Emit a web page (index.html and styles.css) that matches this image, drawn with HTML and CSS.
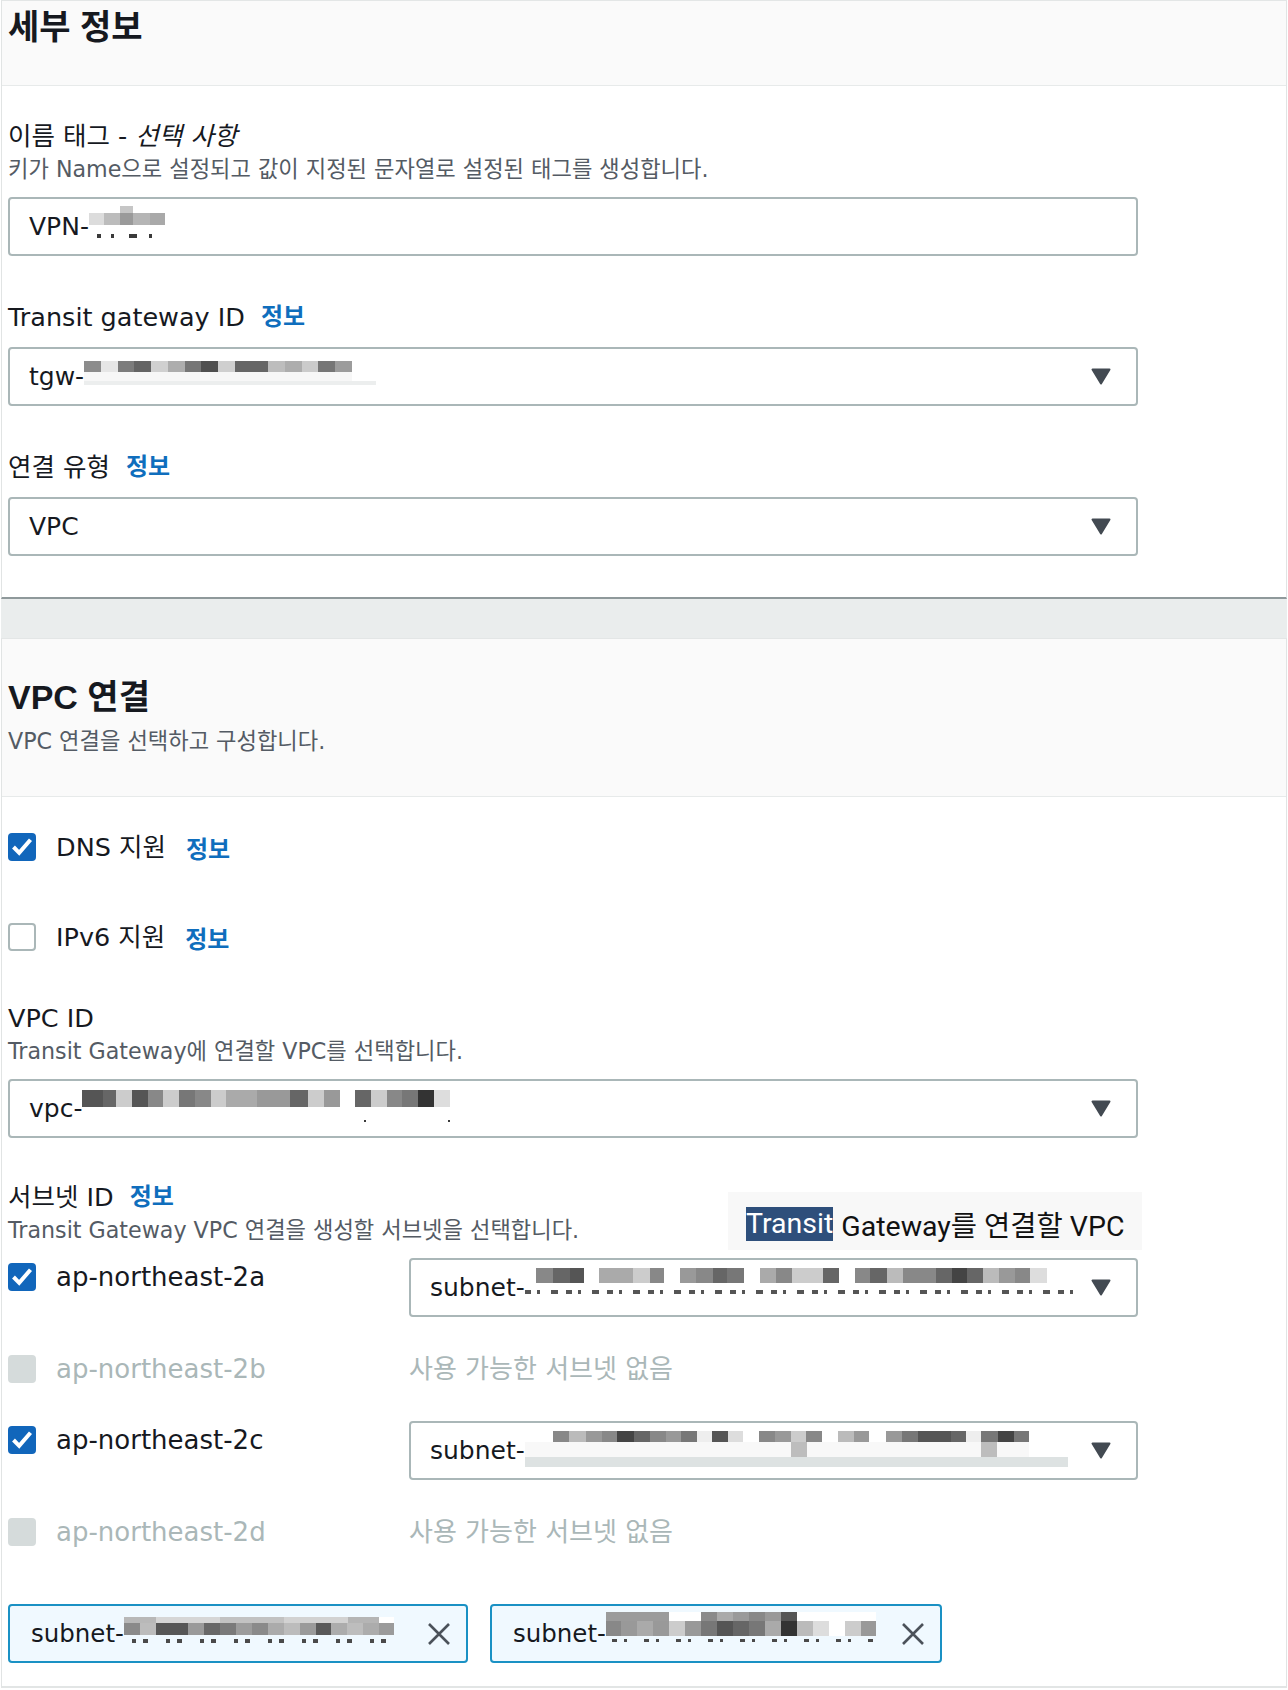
FILE: index.html
```html
<!DOCTYPE html>
<html lang="ko">
<head>
<meta charset="utf-8">
<title>VPC 연결</title>
<link rel="stylesheet" href="styles.css">
</head>
<body>
<div class="page">
  <section class="panel panel-top">
    <header class="panel-header header-details">
      <h2 class="panel-title">세부 정보</h2>
    </header>
    <div class="panel-body body-details">
      <div class="field">
        <div class="label"><span>이름 태그 - <em>선택 사항</em></span></div>
        <div class="desc">키가 Name으로 설정되고 값이 지정된 문자열로 설정된 태그를 생성합니다.</div>
        <div class="control input"><span class="value">VPN-</span><span class="mosaic mz-vpn"></span></div>
      </div>
      <div class="field">
        <div class="label"><span>Transit gateway ID</span><a class="info">정보</a></div>
        <div class="control select"><span class="value">tgw-</span><span class="mosaic mz-tgw"></span>
          <svg class="caret" viewBox="0 0 20 17" width="20" height="17"><path d="M1.5 1.5 H18.5 L10 15.5 Z"/></svg>
        </div>
      </div>
      <div class="field">
        <div class="label"><span>연결 유형</span><a class="info">정보</a></div>
        <div class="control select"><span class="value">VPC</span>
          <svg class="caret" viewBox="0 0 20 17" width="20" height="17"><path d="M1.5 1.5 H18.5 L10 15.5 Z"/></svg>
        </div>
      </div>
    </div>
  </section>

  <div class="band"></div>

  <section class="panel panel-bottom">
    <header class="panel-header header-vpc">
      <h2 class="panel-title">VPC 연결</h2>
      <p class="header-desc">VPC 연결을 선택하고 구성합니다.</p>
    </header>
    <div class="panel-body body-vpc">
      <div class="check-row">
        <span class="cb cb-on"><svg viewBox="0 0 28 28" width="28" height="28"><path d="M5.5 14 L11.2 19.8 L22.5 6.8"/></svg></span>
        <span class="cb-text">DNS 지원</span><a class="info">정보</a>
      </div>
      <div class="check-row row-ipv6">
        <span class="cb cb-off"></span>
        <span class="cb-text">IPv6 지원</span><a class="info">정보</a>
      </div>

      <div class="field field-vpc">
        <div class="label"><span>VPC ID</span></div>
        <div class="desc">Transit Gateway에 연결할 VPC를 선택합니다.</div>
        <div class="control select"><span class="value">vpc-</span><span class="mosaic mz-vpc"></span>
          <svg class="caret" viewBox="0 0 20 17" width="20" height="17"><path d="M1.5 1.5 H18.5 L10 15.5 Z"/></svg>
        </div>
      </div>

      <div class="field field-subnet">
        <div class="label"><span>서브넷 ID</span><a class="info">정보</a></div>
        <div class="desc">Transit Gateway VPC 연결을 생성할 서브넷을 선택합니다.</div>
        <div class="tooltip"><mark class="hl">Transit</mark> Gateway를 연결할 VPC</div>
        <div class="az-list">
          <div class="az-row">
            <div class="az-left">
              <span class="cb cb-on"><svg viewBox="0 0 28 28" width="28" height="28"><path d="M5.5 14 L11.2 19.8 L22.5 6.8"/></svg></span>
              <span class="az-name">ap-northeast-2a</span>
            </div>
            <div class="control select select-subnet"><span class="value">subnet-</span><span class="mosaic mz-sub-a"></span>
              <svg class="caret" viewBox="0 0 20 17" width="20" height="17"><path d="M1.5 1.5 H18.5 L10 15.5 Z"/></svg>
            </div>
          </div>
          <div class="az-row">
            <div class="az-left">
              <span class="cb cb-disabled"></span>
              <span class="az-name az-disabled">ap-northeast-2b</span>
            </div>
            <div class="az-empty">사용 가능한 서브넷 없음</div>
          </div>
          <div class="az-row">
            <div class="az-left">
              <span class="cb cb-on"><svg viewBox="0 0 28 28" width="28" height="28"><path d="M5.5 14 L11.2 19.8 L22.5 6.8"/></svg></span>
              <span class="az-name">ap-northeast-2c</span>
            </div>
            <div class="control select select-subnet"><span class="value">subnet-</span><span class="mosaic mz-sub-c"></span>
              <svg class="caret" viewBox="0 0 20 17" width="20" height="17"><path d="M1.5 1.5 H18.5 L10 15.5 Z"/></svg>
            </div>
          </div>
          <div class="az-row">
            <div class="az-left">
              <span class="cb cb-disabled"></span>
              <span class="az-name az-disabled">ap-northeast-2d</span>
            </div>
            <div class="az-empty">사용 가능한 서브넷 없음</div>
          </div>
        </div>
      </div>

      <div class="tokens">
        <div class="token token-1"><span class="value">subnet-</span><span class="mosaic mz-tok1"></span>
          <svg class="dismiss" viewBox="0 0 24 24" width="24" height="24"><path d="M2 2 L22 22 M22 2 L2 22"/></svg>
        </div>
        <div class="token token-2"><span class="value">subnet-</span><span class="mosaic mz-tok2"></span>
          <svg class="dismiss" viewBox="0 0 24 24" width="24" height="24"><path d="M2 2 L22 22 M22 2 L2 22"/></svg>
        </div>
      </div>
    </div>
  </section>
</div>
</body>
</html>
```
FILE: styles.css
```css
* { box-sizing: border-box; }

html, body {
  margin: 0;
  padding: 0;
  background: #ffffff;
}

body {
  font-family: "DejaVu Sans", "Noto Sans CJK KR", sans-serif;
  color: #16191f;
}

.page {
  margin-left: 1px;
  width: 1286px;
  background: #eaeded;
}

.panel {
  background: #ffffff;
  border-top: 1px solid #e3e6e6;
  border-left: 1px solid #e1e4e4;
  border-right: 1px solid #e1e4e4;
}

.panel-top { border-bottom: 2px solid #8f999b; }
.panel-bottom { border-bottom: 2px solid #e2e5e5; }

.band { height: 39px; }

.panel-header {
  background: #fafafa;
  border-bottom: 1px solid #e7eaea;
  padding-left: 6px;
  padding-right: 6px;
}

.header-details { padding-top: 4px; padding-bottom: 36px; }
.header-vpc { padding-top: 36px; padding-bottom: 39px; }

.panel-title {
  margin: 0;
  font-family: "Liberation Sans", "Noto Sans CJK KR", sans-serif;
  font-size: 34px;
  font-weight: 700;
  line-height: 44px;
  color: #16191f;
}

.header-desc {
  margin: 7px 0 0 0;
  font-size: 22.2px;
  line-height: 31px;
  color: #545b64;
}

.panel-body { padding-left: 6px; padding-right: 6px; }
.body-details { padding-top: 32px; padding-bottom: 41px; }
.body-vpc { padding-top: 32px; padding-bottom: 23px; }

.field + .field { margin-top: 43px; }
.field-vpc { margin-top: 45px; }
.field-subnet { margin-top: 41px !important; position: relative; }

.label {
  display: flex;
  align-items: center;
  gap: 16px;
  font-size: 25.5px;
  line-height: 36px;
  color: #16191f;
}

.label em { font-style: italic; }

.desc {
  font-size: 22.2px;
  line-height: 31px;
  color: #545b64;
}

.info {
  font-size: 24px;
  font-weight: 700;
  color: #0f6ebd;
  text-decoration: none;
}

.control {
  margin-top: 12px;
  width: 1130px;
  height: 59px;
  border: 2px solid #aab7b8;
  border-radius: 4px;
  background: #ffffff;
  display: flex;
  align-items: center;
  padding: 0 25px 0 19px;
}

.value {
  font-size: 25px;
  line-height: 36px;
  color: #16191f;
  white-space: nowrap;
}

.caret {
  margin-left: auto;
  flex: none;
  fill: #434a52;
  stroke: #434a52;
  stroke-width: 2;
  stroke-linejoin: round;
}

/* check rows */
.check-row {
  display: flex;
  align-items: center;
  height: 36px;
}
.row-ipv6 { margin-top: 54px; }

.cb {
  flex: none;
  width: 28px;
  height: 28px;
  border-radius: 4px;
  display: inline-flex;
}
.cb svg path {
  fill: none;
  stroke: #ffffff;
  stroke-width: 4;
}
.cb-on { background: #1166bb; }
.cb-off { background: #ffffff; border: 2px solid #aab7b8; }
.cb-disabled { background: #d5dbdb; }

.cb-text {
  margin-left: 20px;
  margin-right: 20px;
  font-size: 25.5px;
  line-height: 36px;
  color: #16191f;
}

/* availability zones */
.az-list {
  margin-top: 12px;
  display: flex;
  flex-direction: column;
  gap: 33px;
}

.az-row {
  display: flex;
  align-items: flex-start;
}

.az-left {
  width: 401px;
  height: 38px;
  flex: none;
  display: flex;
  align-items: center;
}

.az-name {
  margin-left: 20px;
  font-size: 26px;
  line-height: 36px;
  color: #16191f;
}
.az-disabled { color: #aab7b8; }

.az-empty {
  font-size: 26px;
  line-height: 38px;
  color: #aab7b8;
}

.select-subnet {
  margin-top: 0;
  width: 729px;
}

/* tooltip overlay */
.tooltip {
  position: absolute;
  left: 720px;
  top: 13px;
  width: 414px;
  height: 58px;
  background: #f8f8f8;
  display: flex;
  align-items: center;
  padding-left: 18px;
  padding-top: 5px;
  font-family: Roboto, "Noto Sans CJK KR", sans-serif;
  font-size: 28.5px;
  color: #111111;
  white-space: nowrap;
  z-index: 2;
}
.hl {
  background: #2e4f7b;
  color: #ffffff;
  display: inline-block;
  line-height: 34px;
  margin-right: 8px;
}

/* tokens */
.tokens {
  margin-top: 53px;
  display: flex;
  gap: 22px;
}

.token {
  height: 59px;
  border: 2px solid #1a91c4;
  border-radius: 4px;
  background: #f0f9ff;
  display: flex;
  align-items: center;
  padding: 0 15px 0 21px;
}
.token-1 { width: 460px; }
.token-2 { width: 452px; }

.token .value { font-size: 24.5px; }

.dismiss {
  margin-left: auto;
  flex: none;
  fill: none;
  stroke: #4b525a;
  stroke-width: 2.6;
}

/* pixelated (redacted) identifiers */
.mosaic {
  display: block;
  flex: none;
  align-self: flex-start;
  background-repeat: no-repeat;
}

.mz-vpn {
  width: 76px;
  height: 32px;
  margin-top: 7px;
  background-image:
    linear-gradient(#c6c6c6, #c6c6c6),
    linear-gradient(90deg, #dcdcdc 0 15px, #bcbcbc 15px 31px, #9a9a9a 31px 44px, #b5b5b5 44px 61px, #a9a9a9 61px 76px),
    linear-gradient(90deg, transparent 0 8px, #3a3a3a 8px 12px, transparent 12px 22px, #3a3a3a 22px 25px, transparent 25px 40px, #3a3a3a 40px 48px, transparent 48px 60px, #3a3a3a 60px 63px, transparent 63px);
  background-size: 13px 7px, 76px 12px, 76px 4px;
  background-position: 31px 0, 0 7px, 0 28px;
}

.mz-tgw {
  width: 292px;
  height: 24px;
  margin-top: 12px;
  background-image:
    linear-gradient(90deg, #8c8c8c 0 17px, #e6e6e6 17px 34px, #7c7c7c 34px 50px, #646464 50px 67px, #d0d0d0 67px 84px, #adadad 84px 101px, #767676 101px 117px, #4f4f4f 117px 134px, #cfcfcf 134px 151px, #666666 151px 184px, #bdbdbd 184px 201px, #adadad 201px 218px, #cbcbcb 218px 234px, #767676 234px 251px, #9c9c9c 251px 268px),
    linear-gradient(90deg, #f7f7f7 0 268px, #ffffff 268px),
    linear-gradient(#eceeee, #eceeee);
  background-size: 268px 11px, 292px 9px, 292px 4px;
  background-position: 0 0, 0 11px, 0 20px;
}

.mz-vpc {
  width: 368px;
  height: 36px;
  margin-top: 9px;
  background-image:
    linear-gradient(90deg, #555555 0 21px, #666666 21px 34px, #cccccc 34px 50px, #555555 50px 66px, #888888 66px 81px, #cccccc 81px 97px, #777777 97px 113px, #888888 113px 129px, #cccccc 129px 144px, #aaaaaa 144px 175px, #999999 175px 208px, #666666 208px 226px, #cccccc 226px 242px, #999999 242px 258px, #ffffff 258px 273px, #666666 273px 289px, #cccccc 289px 305px, #888888 305px 320px, #777777 320px 336px, #333333 336px 352px, #dddddd 352px 368px),
    linear-gradient(#3a3a3a, #3a3a3a),
    linear-gradient(#3a3a3a, #3a3a3a);
  background-size: 368px 17px, 2px 2px, 2px 2px;
  background-position: 0 0, 282px 30px, 366px 30px;
}

.mz-sub-a {
  width: 551px;
  height: 36px;
  margin-top: 6px;
  background-image:
    linear-gradient(90deg, #ffffff 0 11px, #888888 11px 28px, #666666 28px 45px, #555555 45px 59px, #ffffff 59px 74px, #aaaaaa 74px 108px, #cccccc 108px 125px, #888888 125px 139px, #ffffff 139px 155px, #999999 155px 171px, #888888 171px 188px, #666666 188px 202px, #777777 202px 219px, #ffffff 219px 235px, #aaaaaa 235px 251px, #888888 251px 267px, #cccccc 267px 298px, #666666 298px 314px, #ffffff 314px 330px, #888888 330px 345px, #666666 345px 362px, #bbbbbb 362px 378px, #888888 378px 411px, #666666 411px 427px, #444444 427px 442px, #666666 442px 458px, #bbbbbb 458px 474px, #999999 474px 490px, #888888 490px 505px, #dddddd 505px 522px, #ffffff 522px),
    repeating-linear-gradient(90deg, #555555 0 6px, transparent 6px 12px, #555555 12px 15px, transparent 15px 26px, #555555 26px 33px, transparent 33px 41px);
  background-size: 551px 15px, 551px 4px;
  background-position: 0 2px, 0 24px;
}

.mz-sub-c {
  width: 543px;
  height: 36px;
  margin-top: 8px;
  background-image:
    linear-gradient(90deg, #ffffff 0 28px, #888888 28px 44px, #bbbbbb 44px 61px, #999999 61px 77px, #888888 77px 92px, #444444 92px 109px, #666666 109px 125px, #888888 125px 141px, #999999 141px 156px, #777777 156px 172px, #eeeeee 172px 187px, #555555 187px 203px, #dddddd 203px 218px, #ffffff 218px 234px, #888888 234px 250px, #999999 250px 266px, #cccccc 266px 281px, #888888 281px 297px, #ffffff 297px 313px, #bbbbbb 313px 329px, #999999 329px 344px, #ffffff 344px 361px, #999999 361px 377px, #777777 377px 393px, #555555 393px 426px, #666666 426px 441px, #eeeeee 441px 456px, #777777 456px 473px, #444444 473px 489px, #777777 489px 504px, #ffffff 504px),
    linear-gradient(#bdbdbd, #bdbdbd),
    linear-gradient(#bdbdbd, #bdbdbd),
    linear-gradient(90deg, #f8f8f8 0 504px, #ffffff 504px),
    linear-gradient(#dde2e2, #dde2e2);
  background-size: 543px 11px, 16px 15px, 16px 15px, 543px 15px, 543px 10px;
  background-position: 0 0, 266px 11px, 456px 11px, 0 11px, 0 26px;
}

.mz-tok1 {
  width: 270px;
  height: 28px;
  margin-top: 11px;
  background-image:
    linear-gradient(90deg, #b8b8b8 0 32px, #d6d6d6 32px 96px, #c2c2c2 96px 160px, #d2d2d2 160px 224px, #b5b5b5 224px 255px, #ffffff 255px),
    linear-gradient(90deg, #8a8a8a 0 16px, #bcbcbc 16px 32px, #575757 32px 64px, #9a9a9a 64px 80px, #686868 80px 96px, #7a7a7a 96px 112px, #9c9c9c 112px 128px, #8a8a8a 128px 144px, #ababab 144px 160px, #bcbcbc 160px 176px, #9a9a9a 176px 192px, #595959 192px 207px, #acacac 207px 223px, #bdbdbd 223px 239px, #acacac 239px 255px, #9b9b9b 255px 269px),
    repeating-linear-gradient(90deg, transparent 0 8px, #4a4a4a 8px 12px, transparent 12px 19px, #4a4a4a 19px 24px, transparent 24px 34px);
  background-size: 270px 6px, 270px 12px, 270px 4px;
  background-position: 0 0, 0 6px, 0 22px;
}

.mz-tok2 {
  width: 270px;
  height: 30px;
  margin-top: 6px;
  background-image:
    linear-gradient(90deg, #9b9b9b 0 63px, #ffffff 63px 95px, #8a8a8a 95px 111px, #aaaaaa 111px 127px, #9a9a9a 127px 143px, #888888 143px 159px, #999999 159px 175px, #555555 175px 191px, #ffffff 191px),
    linear-gradient(90deg, #888888 0 15px, #999999 15px 31px, #aaaaaa 31px 47px, #999999 47px 63px, #cccccc 63px 79px, #999999 79px 95px, #777777 95px 111px, #555555 111px 127px, #666666 127px 143px, #777777 143px 159px, #aaaaaa 159px 175px, #333333 175px 191px, #bbbbbb 191px 207px, #dddddd 207px 223px, #ffffff 223px 239px, #cccccc 239px 255px, #999999 255px 270px),
    repeating-linear-gradient(90deg, transparent 0 6px, #4a4a4a 6px 11px, transparent 11px 18px, #4a4a4a 18px 21px, transparent 21px 32px);
  background-size: 270px 9px, 270px 15px, 270px 4px;
  background-position: 0 0, 0 9px, 0 27px;
}
```
